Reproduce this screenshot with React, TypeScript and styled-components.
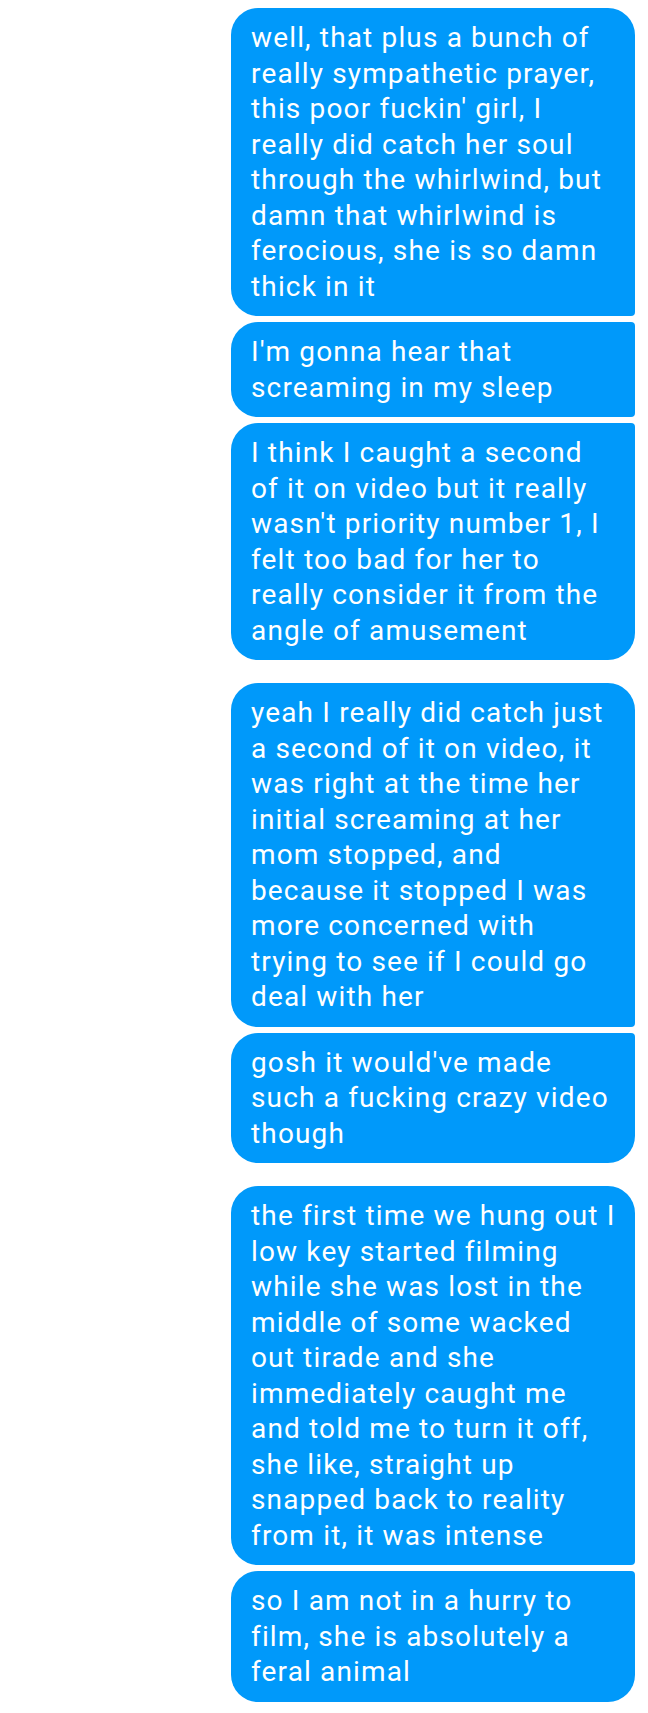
import styled, { createGlobalStyle } from "styled-components";

const GlobalStyle = createGlobalStyle`
  html, body {
    margin: 0;
    padding: 0;
    background: #ffffff;
  }
`;

type Position = "first" | "middle" | "last";

interface Message {
  lines: string[];
  position: Position;
}

interface Group {
  gapBefore: number;
  messages: Message[];
}

const groups: Group[] = [
  {
    gapBefore: 8,
    messages: [
      {
        position: "first",
        lines: [
          "well, that plus a bunch of",
          "really sympathetic prayer,",
          "this poor fuckin' girl, I",
          "really did catch her soul",
          "through the whirlwind, but",
          "damn that whirlwind is",
          "ferocious, she is so damn",
          "thick in it",
        ],
      },
      {
        position: "middle",
        lines: ["I'm gonna hear that", "screaming in my sleep"],
      },
      {
        position: "last",
        lines: [
          "I think I caught a second",
          "of it on video but it really",
          "wasn't priority number 1, I",
          "felt too bad for her to",
          "really consider it from the",
          "angle of amusement",
        ],
      },
    ],
  },
  {
    gapBefore: 23,
    messages: [
      {
        position: "first",
        lines: [
          "yeah I really did catch just",
          "a second of it on video, it",
          "was right at the time her",
          "initial screaming at her",
          "mom stopped, and",
          "because it stopped I was",
          "more concerned with",
          "trying to see if I could go",
          "deal with her",
        ],
      },
      {
        position: "last",
        lines: [
          "gosh it would've made",
          "such a fucking crazy video",
          "though",
        ],
      },
    ],
  },
  {
    gapBefore: 23,
    messages: [
      {
        position: "first",
        lines: [
          "the first time we hung out I",
          "low key started filming",
          "while she was lost in the",
          "middle of some wacked",
          "out tirade and she",
          "immediately caught me",
          "and told me to turn it off,",
          "she like, straight up",
          "snapped back to reality",
          "from it, it was intense",
        ],
      },
      {
        position: "last",
        lines: [
          "so I am not in a hurry to",
          "film, she is absolutely a",
          "feral animal",
        ],
      },
    ],
  },
];

const radii: Record<Position, string> = {
  first: "27px 27px 4px 27px",
  middle: "27px 4px 4px 27px",
  last: "27px 4px 27px 27px",
};

const App = () => {
  return (
    <>
      <GlobalStyle />
      <Thread>
        {groups.map((group, gi) => (
          <GroupBlock key={gi} $gap={group.gapBefore}>
            {group.messages.map((msg, mi) => (
              <Bubble key={mi} $position={msg.position}>
                {msg.lines.map((line, li) => (
                  <Line key={li}>{line}</Line>
                ))}
              </Bubble>
            ))}
          </GroupBlock>
        ))}
      </Thread>
    </>
  );
};

export default App;

const Thread = styled.div`
  width: 648px;
  height: 1713px;
  box-sizing: border-box;
  display: flex;
  flex-direction: column;
  align-items: flex-end;
  padding-right: 13px;
  background: #ffffff;
  font-family: Roboto, "Noto Sans", sans-serif;
`;

const GroupBlock = styled.div<{ $gap: number }>`
  display: flex;
  flex-direction: column;
  gap: 6px;
  margin-top: ${(p) => p.$gap}px;
`;

const Bubble = styled.div<{ $position: Position }>`
  width: 404px;
  box-sizing: border-box;
  padding: 12px 20px 12px 20px;
  background: #0099fa;
  color: #ffffff;
  border-radius: ${(p) => radii[p.$position]};
  font-size: 28px;
  line-height: 35.5px;
  letter-spacing: 1.15px;
`;

const Line = styled.div`
  white-space: nowrap;
`;
